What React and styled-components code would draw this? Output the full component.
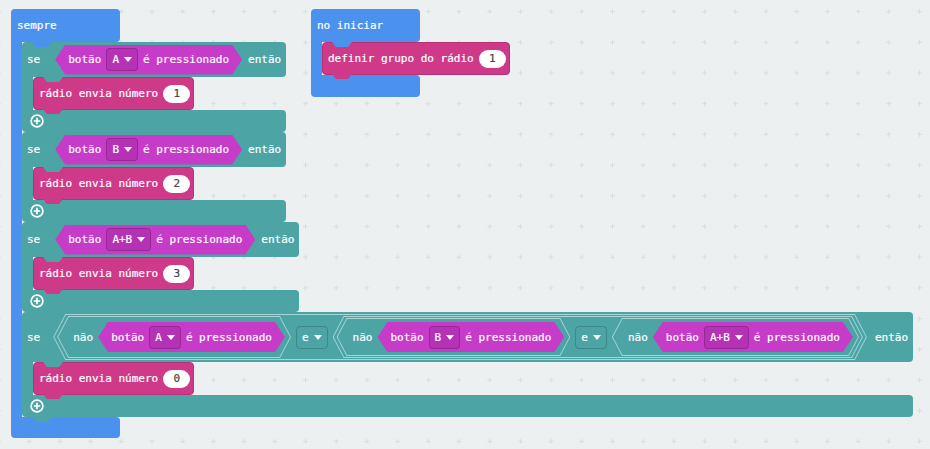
import React from "react";
import styled, { createGlobalStyle, css } from "styled-components";

const BLUE = "#4b91ee";
const TEAL = "#4ca4a5";
const MAGENTA = "#c63bc8";
const PINK = "#cf3a88";

const GlobalStyle = createGlobalStyle`
  html, body {
    margin: 0;
    padding: 0;
  }
  body {
    background: #ecf0f1;
    font-family: "DejaVu Sans Mono", "Liberation Mono", monospace;
    font-size: 11px;
    color: #fff;
    -webkit-text-stroke: 0.2px currentColor;
  }
`;

const hex = (tip) =>
  `polygon(0 50%, ${tip}px 0, calc(100% - ${tip}px) 0, 100% 50%, calc(100% - ${tip}px) 100%, ${tip}px 100%)`;

// little connector tab hanging under a block
const tab = (color, left) => css`
  &::after {
    content: "";
    position: absolute;
    top: 100%;
    left: ${left}px;
    width: 20px;
    height: 5px;
    background: ${color};
    clip-path: polygon(0 0, 100% 0, calc(100% - 4px) 100%, 4px 100%);
    z-index: 2;
  }
`;

const Workspace = styled.div`
  position: relative;
  width: 930px;
  height: 449px;
  overflow: hidden;
  background: #ecf0f1;
`;

const Grid = styled.svg`
  position: absolute;
  left: 0;
  top: 0;
`;

const Script = styled.div`
  position: absolute;
  left: ${(p) => p.$x}px;
  top: ${(p) => p.$y}px;
`;

const CBlock = styled.div`
  display: flex;
  flex-direction: column;
  align-items: ${(p) => (p.$hat ? "flex-start" : "stretch")};
  width: fit-content;
`;

const CHead = styled.div`
  position: relative;
  display: flex;
  align-items: center;
  box-sizing: border-box;
  height: ${(p) => p.$h}px;
  width: ${(p) => (p.$w ? `${p.$w}px` : "auto")};
  padding: 0 5px 0 ${(p) => p.$pl || 5}px;
  background: ${(p) => p.$color};
  border-radius: 4px 4px 4px 0;
  white-space: nowrap;
  ${(p) => tab(p.$color, 21)}
`;

const CBody = styled.div`
  display: flex;
`;

const Arm = styled.div`
  flex: none;
  width: 11px;
  background: ${(p) => p.$color};
`;

const Stack = styled.div`
  display: flex;
  flex-direction: column;
  align-items: flex-start;
`;

const CFoot = styled.div`
  position: relative;
  display: flex;
  align-items: center;
  box-sizing: border-box;
  height: ${(p) => p.$h}px;
  width: ${(p) => (p.$w ? `${p.$w}px` : "auto")};
  padding-left: 8px;
  background: ${(p) => p.$color};
  border-radius: 0 4px 4px 4px;
  ${(p) => p.$tab && tab(p.$color, 10)}
`;

const Word = styled.span`
  margin-left: ${(p) => p.$ml || 0}px;
  margin-right: ${(p) => p.$mr || 0}px;
`;

const Statement = styled.div`
  position: relative;
  display: flex;
  align-items: center;
  gap: 5px;
  box-sizing: border-box;
  height: 33px;
  padding: 0 3px 0 5px;
  background: ${PINK};
  border: 1px solid #b8307a;
  border-radius: 4px;
  white-space: nowrap;
  ${tab(PINK, 9)}
`;

const Pill = styled.span`
  display: flex;
  align-items: center;
  justify-content: center;
  min-width: 27px;
  height: 18px;
  border-radius: 9px;
  background: #fff;
  color: #444;
`;

const Bool = styled.div`
  display: flex;
  align-items: center;
  gap: 5px;
  height: 30px;
  padding: 0 13px;
  background: ${MAGENTA};
  clip-path: ${hex(10)};
  white-space: nowrap;
`;

const Dropdown = styled.div`
  display: flex;
  align-items: center;
  gap: 5px;
  box-sizing: border-box;
  height: 23px;
  padding: 0 5px;
  border: 1px solid rgba(0, 0, 0, 0.18);
  border-radius: 4px;
  background: ${(p) => p.$bg || "transparent"};

  &::after {
    content: "";
    border-left: 4px solid transparent;
    border-right: 4px solid transparent;
    border-top: 5px solid #fff;
  }
`;

const HexLine = styled.div`
  display: flex;
  padding: 1px;
  background: #a4d6d6;
  clip-path: ${(p) => hex(p.$tip)};
`;

const HexFill = styled.div`
  display: flex;
  align-items: center;
  gap: 5px;
  padding: ${(p) => `${p.$v}px ${p.$r}px ${p.$v}px ${p.$l}px`};
  background: ${TEAL};
  clip-path: ${(p) => hex(p.$tip - 0.5)};
  white-space: nowrap;
`;

const Plus = () => (
  <svg width="14" height="14" viewBox="0 0 14 14">
    <circle cx="7" cy="7" r="5.9" fill="none" stroke="#fff" strokeWidth="1.7" />
    <path d="M7 3.8v6.4M3.8 7h6.4" stroke="#fff" strokeWidth="1.7" />
  </svg>
);

const Pressed = ({ button }) => (
  <Bool>
    <span>botão</span>
    <Dropdown $bg="#b532b7">{button}</Dropdown>
    <span>é pressionado</span>
  </Bool>
);

const Not = ({ button, v, tip }) => (
  <HexLine $tip={tip}>
    <HexFill $tip={tip} $v={v} $l={15} $r={5}>
      <span>não</span>
      <Pressed button={button} />
    </HexFill>
  </HexLine>
);

const Logic = ({ v, tip, children }) => (
  <HexLine $tip={tip}>
    <HexFill $tip={tip} $v={v} $l={3} $r={3}>
      {children}
    </HexFill>
  </HexLine>
);

const And = () => <Dropdown>e</Dropdown>;

const RadioSend = ({ value }) => (
  <Statement>
    <span>rádio envia número</span>
    <Pill>{value}</Pill>
  </Statement>
);

const IfBlock = ({ tall, before, after, value, children }) => (
  <CBlock>
    <CHead $color={TEAL} $h={tall ? 50 : 35}>
      <Word $mr={before}>se</Word>
      {children}
      <Word $ml={after}>então</Word>
    </CHead>
    <CBody>
      <Arm $color={TEAL} />
      <Stack>
        <RadioSend value={value} />
      </Stack>
    </CBody>
    <CFoot $color={TEAL} $h={22} $tab>
      <Plus />
    </CFoot>
  </CBlock>
);

const GridPattern = () => (
  <Grid width="930" height="449">
    <defs>
      <pattern id="dots" width="30.7" height="30.7" patternUnits="userSpaceOnUse" x="13.85" y="-3.75">
        <path d="M12.85 15.35h5M15.35 12.85v5" stroke="#d9dde0" strokeWidth="1" />
      </pattern>
    </defs>
    <rect width="930" height="449" fill="url(#dots)" />
  </Grid>
);

export default function App() {
  return (
    <Workspace>
      <GlobalStyle />
      <GridPattern />

      <Script $x={11} $y={9}>
        <CBlock $hat>
          <CHead $color={BLUE} $h={33} $w={109} $pl={6}>
            sempre
          </CHead>
          <CBody>
            <Arm $color={BLUE} />
            <Stack>
              <IfBlock before={15} after={6} value="1">
                <Pressed button="A" />
              </IfBlock>
              <IfBlock before={15} after={6} value="2">
                <Pressed button="B" />
              </IfBlock>
              <IfBlock before={15} after={6} value="3">
                <Pressed button="A+B" />
              </IfBlock>
              <IfBlock tall before={13} after={8} value="0">
                <Logic v={1} tip={12}>
                  <Not button="A" v={5} tip={11} />
                  <And />
                  <Logic v={1} tip={11}>
                    <Not button="B" v={3} tip={10} />
                    <And />
                    <Not button="A+B" v={3} tip={10} />
                  </Logic>
                </Logic>
              </IfBlock>
            </Stack>
          </CBody>
          <CFoot $color={BLUE} $h={21} $w={109} />
        </CBlock>
      </Script>

      <Script $x={311} $y={9}>
        <CBlock $hat>
          <CHead $color={BLUE} $h={33} $w={109} $pl={6}>
            no iniciar
          </CHead>
          <CBody>
            <Arm $color={BLUE} />
            <Stack>
              <Statement>
                <span>definir grupo do rádio</span>
                <Pill>1</Pill>
              </Statement>
            </Stack>
          </CBody>
          <CFoot $color={BLUE} $h={22} $w={109} />
        </CBlock>
      </Script>
    </Workspace>
  );
}
